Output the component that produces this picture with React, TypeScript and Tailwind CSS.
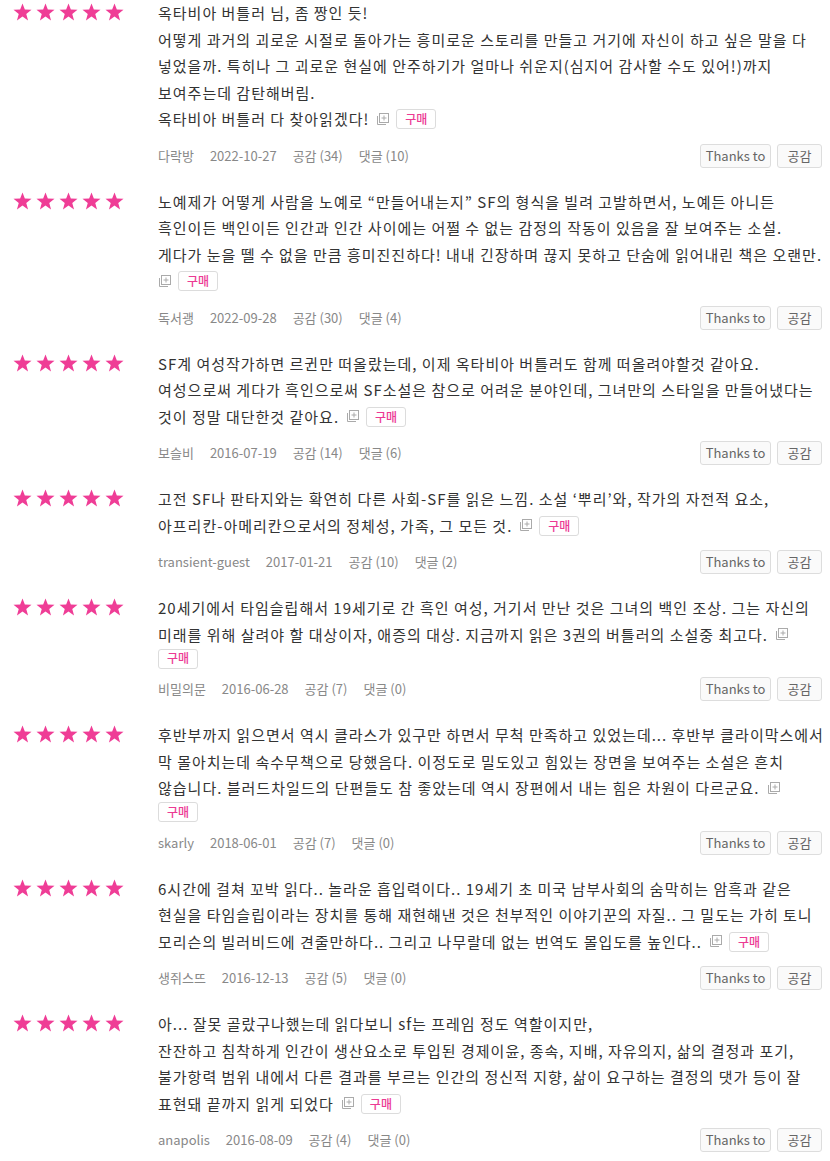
type Review = {
  lines: string[];
  tail: "inline" | "own" | "split";
  user: string;
  date: string;
  likes: number;
  comments: number;
};

const reviews: Review[] = [
  {
    lines: [
      "옥타비아 버틀러 님, 좀 짱인 듯!",
      "어떻게 과거의 괴로운 시절로 돌아가는 흥미로운 스토리를 만들고 거기에 자신이 하고 싶은 말을 다",
      "넣었을까. 특히나 그 괴로운 현실에 안주하기가 얼마나 쉬운지(심지어 감사할 수도 있어!)까지",
      "보여주는데 감탄해버림.",
      "옥타비아 버틀러 다 찾아읽겠다!",
    ],
    tail: "inline",
    user: "다락방",
    date: "2022-10-27",
    likes: 34,
    comments: 10,
  },
  {
    lines: [
      "노예제가 어떻게 사람을 노예로 “만들어내는지” SF의 형식을 빌려 고발하면서, 노예든 아니든",
      "흑인이든 백인이든 인간과 인간 사이에는 어쩔 수 없는 감정의 작동이 있음을 잘 보여주는 소설.",
      "게다가 눈을 뗄 수 없을 만큼 흥미진진하다! 내내 긴장하며 끊지 못하고 단숨에 읽어내린 책은 오랜만.",
    ],
    tail: "own",
    user: "독서괭",
    date: "2022-09-28",
    likes: 30,
    comments: 4,
  },
  {
    lines: [
      "SF계 여성작가하면 르귄만 떠올랐는데, 이제 옥타비아 버틀러도 함께 떠올려야할것 같아요.",
      "여성으로써 게다가 흑인으로써 SF소설은 참으로 어려운 분야인데, 그녀만의 스타일을 만들어냈다는",
      "것이 정말 대단한것 같아요.",
    ],
    tail: "inline",
    user: "보슬비",
    date: "2016-07-19",
    likes: 14,
    comments: 6,
  },
  {
    lines: [
      "고전 SF나 판타지와는 확연히 다른 사회-SF를 읽은 느낌. 소설 ‘뿌리’와, 작가의 자전적 요소,",
      "아프리칸-아메리칸으로서의 정체성, 가족, 그 모든 것.",
    ],
    tail: "inline",
    user: "transient-guest",
    date: "2017-01-21",
    likes: 10,
    comments: 2,
  },
  {
    lines: [
      "20세기에서 타임슬립해서 19세기로 간 흑인 여성, 거기서 만난 것은 그녀의 백인 조상. 그는 자신의",
      "미래를 위해 살려야 할 대상이자, 애증의 대상. 지금까지 읽은 3권의 버틀러의 소설중 최고다.",
    ],
    tail: "split",
    user: "비밀의문",
    date: "2016-06-28",
    likes: 7,
    comments: 0,
  },
  {
    lines: [
      "후반부까지 읽으면서 역시 클라스가 있구만 하면서 무척 만족하고 있었는데... 후반부 클라이막스에서",
      "막 몰아치는데 속수무책으로 당했음다. 이정도로 밀도있고 힘있는 장면을 보여주는 소설은 흔치",
      "않습니다. 블러드차일드의 단편들도 참 좋았는데 역시 장편에서 내는 힘은 차원이 다르군요.",
    ],
    tail: "split",
    user: "skarly",
    date: "2018-06-01",
    likes: 7,
    comments: 0,
  },
  {
    lines: [
      "6시간에 걸쳐 꼬박 읽다.. 놀라운 흡입력이다.. 19세기 초 미국 남부사회의 숨막히는 암흑과 같은",
      "현실을 타임슬립이라는 장치를 통해 재현해낸 것은 천부적인 이야기꾼의 자질.. 그 밀도는 가히 토니",
      "모리슨의 빌러비드에 견줄만하다.. 그리고 나무랄데 없는 번역도 몰입도를 높인다..",
    ],
    tail: "inline",
    user: "생쥐스뜨",
    date: "2016-12-13",
    likes: 5,
    comments: 0,
  },
  {
    lines: [
      "아... 잘못 골랐구나했는데 읽다보니 sf는 프레임 정도 역할이지만,",
      "잔잔하고 침착하게 인간이 생산요소로 투입된 경제이윤, 종속, 지배, 자유의지, 삶의 결정과 포기,",
      "불가항력 범위 내에서 다른 결과를 부르는 인간의 정신적 지향, 삶이 요구하는 결정의 댓가 등이 잘",
      "표현돼 끝까지 읽게 되었다",
    ],
    tail: "inline",
    user: "anapolis",
    date: "2016-08-09",
    likes: 4,
    comments: 0,
  },
];

function Star() {
  return (
    <svg width="19" height="18" viewBox="0 0 24 23">
      <polygon
        points="12,0.5 15,8.3 23.5,8.6 16.8,13.9 19.1,22.3 12,17.4 4.9,22.3 7.2,13.9 0.5,8.6 9,8.3"
        fill="#ef3d96"
      />
    </svg>
  );
}

function MoreIcon() {
  return (
    <svg width="13" height="13" viewBox="0 0 13 13" className="inline-block">
      <path d="M1.5 3 V11.5 H10" fill="none" stroke="#aaa" strokeWidth="1" />
      <rect x="3.5" y="0.5" width="9" height="9" fill="#fff" stroke="#aaa" strokeWidth="1" />
      <path d="M8 2.5 V7.5 M5.5 5 H10.5" stroke="#aaa" strokeWidth="1" />
    </svg>
  );
}

function Buy() {
  return (
    <span className="inline-flex h-[20px] w-[40px] items-center justify-center rounded-[3px] border border-[#dcdcdc] bg-white text-[12px] font-medium tracking-normal text-[#ec3a93]">
      구매
    </span>
  );
}

function Item({ r }: { r: Review }) {
  const last = r.lines.length - 1;
  return (
    <article className="flex">
      <div className="flex w-[158px] shrink-0 gap-[4px] pl-[13px] pt-[3px]">
        <Star />
        <Star />
        <Star />
        <Star />
        <Star />
      </div>
      <div className="min-w-0 flex-1 pr-[8px]">
        <div className="text-[15px] leading-[26.5px] tracking-[1px] text-[#333]">
          {r.lines.map((line, i) => (
            <div key={i} className="flex items-center whitespace-nowrap">
              <span>{line}</span>
              {i === last && r.tail === "inline" && (
                <span className="ml-[7px] flex items-center gap-[7px]">
                  <MoreIcon />
                  <Buy />
                </span>
              )}
              {i === last && r.tail === "split" && (
                <span className="ml-[7px] flex items-center">
                  <MoreIcon />
                </span>
              )}
            </div>
          ))}
          {r.tail === "own" && (
            <div className="flex h-[26.5px] items-center gap-[7px]">
              <MoreIcon />
              <Buy />
            </div>
          )}
          {r.tail === "split" && (
            <div className="flex h-[21px] items-center">
              <Buy />
            </div>
          )}
        </div>
        <div
          className={
            r.tail === "split"
              ? "mt-[8px] flex h-[24px] items-center justify-between"
              : "mt-[11px] flex h-[24px] items-center justify-between"
          }
        >
          <div className="flex items-center gap-4 text-[13px] text-[#888]">
            <span>{r.user}</span>
            <span>{r.date}</span>
            <span>공감 ({r.likes})</span>
            <span>댓글 ({r.comments})</span>
          </div>
          <div className="flex gap-[6px]">
            <button className="h-[24px] w-[71px] rounded-[3px] border border-[#ddd] bg-[#fafafa] text-[13px] text-[#666]">
              Thanks to
            </button>
            <button className="h-[24px] w-[45px] rounded-[3px] border border-[#ddd] bg-[#fafafa] text-[13px] text-[#666]">
              공감
            </button>
          </div>
        </div>
      </div>
    </article>
  );
}

export default function App() {
  return (
    <div
      className="flex w-[830px] flex-col gap-[21px] bg-white"
      style={{ fontFamily: "'Noto Sans CJK KR', 'Noto Sans', sans-serif" }}
    >
      {reviews.map((r, i) => (
        <Item key={i} r={r} />
      ))}
    </div>
  );
}
